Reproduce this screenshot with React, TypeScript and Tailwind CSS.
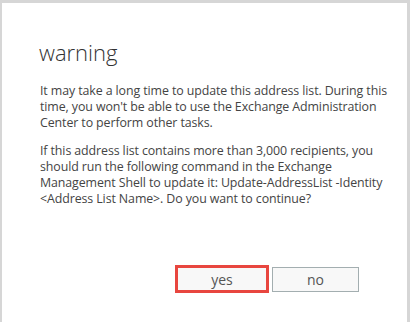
export default function App() {
  return (
    <div className="w-[410px] h-[322px] bg-[#d6d6d6] pt-[3px] pl-[2px] pr-[3px] overflow-hidden">
      <div
        className="h-full bg-white flex flex-col text-[#444]"
        style={{ fontFamily: '"Segoe UI", "Open Sans", "Liberation Sans", sans-serif' }}
      >
        <h1 className="pl-[37px] pt-[35px] text-[22px] font-light leading-[28px] text-[#333]">warning</h1>
        <div className="pl-[38px] pr-[4px] pt-[17px] text-[12.4px] leading-[16px] tracking-[-0.1px]">
          <p>
            It may take a long time to update this address list. During this time, you won't be able to use the
            Exchange Administration Center to perform other tasks.
          </p>
          <p className="mt-[12px]">
            If this address list contains more than 3,000 recipients, you should run the following command in the
            Exchange Management Shell to update it: Update-AddressList -Identity &lt;Address List Name&gt;. Do you want
            to continue?
          </p>
        </div>
        <div className="mt-auto mb-[29px] flex items-center pl-[173px] gap-[3px]">
          <button className="w-[94px] h-[28px] border-[3px] border-[#e8463f] bg-[#f8f8f8] text-[14px] text-[#555]">
            yes
          </button>
          <button className="w-[87px] h-[25px] border border-[#a3aeb0] bg-[#f8f8f8] text-[14px] text-[#555]">
            no
          </button>
        </div>
      </div>
    </div>
  );
}
